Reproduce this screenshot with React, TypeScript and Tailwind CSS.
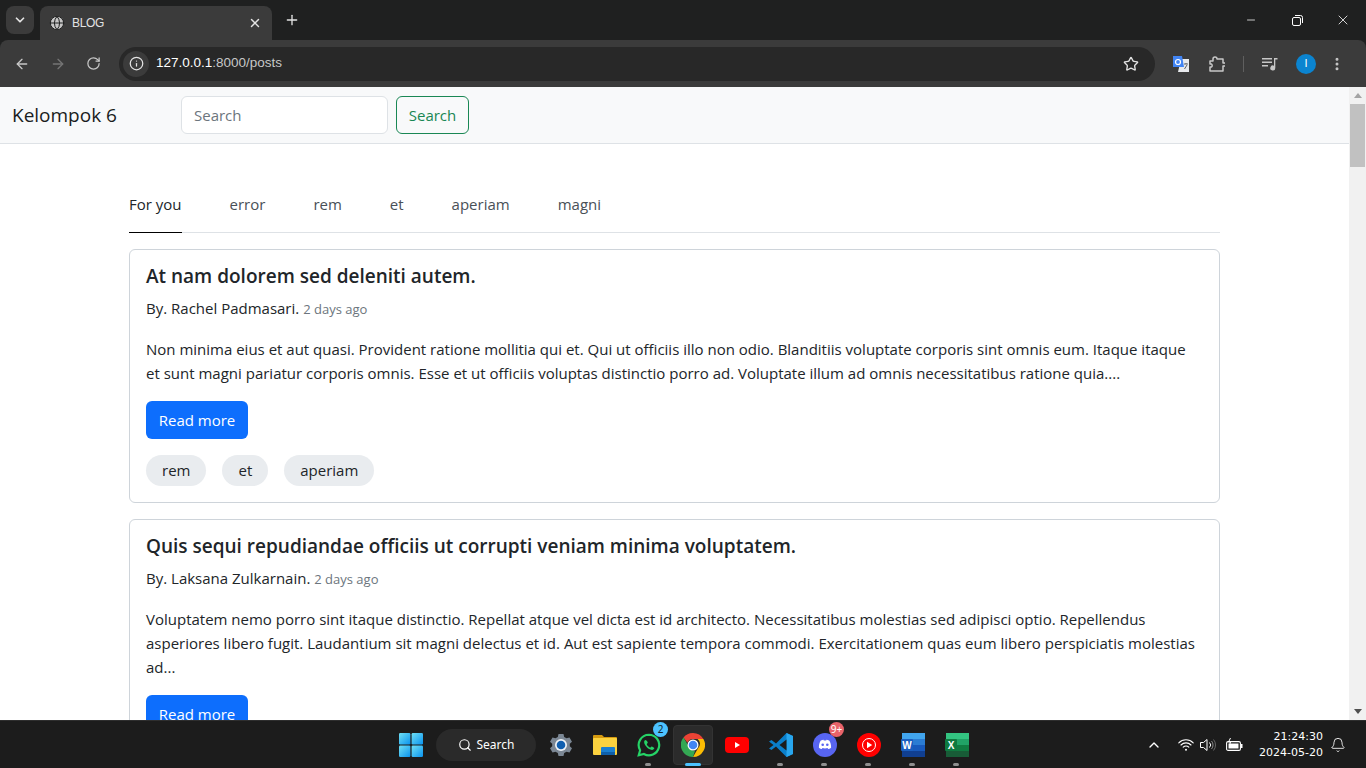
import { ArrowLeft, ArrowRight, RotateCw, Info, Star, Plus, X, ChevronDown, Minus, Search, ChevronUp, Bell, MoreVertical, Globe } from "lucide-react"

const font = "font-['Open_Sans',sans-serif]"

const WinLogo = () => (
  <svg width="24" height="24" viewBox="0 0 24 24">
    <defs>
      <linearGradient id="win" x1="0" y1="0" x2="1" y2="1">
        <stop offset="0" stopColor="#6fe0f5" />
        <stop offset="1" stopColor="#0a93ee" />
      </linearGradient>
    </defs>
    <rect x="0" y="0" width="11.4" height="11.4" rx="1.2" fill="url(#win)" />
    <rect x="12.6" y="0" width="11.4" height="11.4" rx="1.2" fill="url(#win)" />
    <rect x="0" y="12.6" width="11.4" height="11.4" rx="1.2" fill="url(#win)" />
    <rect x="12.6" y="12.6" width="11.4" height="11.4" rx="1.2" fill="url(#win)" />
  </svg>
)

const SettingsIcon = () => (
  <svg width="24" height="24" viewBox="0 0 24 24">
    <path d="M9.5 1h5l.7 3 2.3 1.3 3-.9 2.5 4.300-2.200 2.100v2.400l2.200 2.100-2.500 4.300-3-.9-2.300 1.300-.7 3h-5l-.7-3-2.300-1.300-3 .9L1 15.300l2.200-2.100v-2.400L1 8.700l2.500-4.300 3 .9 2.300-1.300z" fill="#7b8794" />
    <circle cx="12" cy="12" r="6" fill="#eef2f6" />
    <circle cx="12" cy="12" r="4.300" fill="#0f5fb0" />
  </svg>
)

const FolderIcon = () => (
  <svg width="24" height="24" viewBox="0 0 24 24">
    <path d="M0 3a1 1 0 0 1 1-1h8l2 2h12a1 1 0 0 1 1 1v3H0z" fill="#d59a10" />
    <rect x="0" y="5" width="24" height="17" rx="1" fill="#fbd23f" />
    <rect x="8" y="14" width="14" height="7" rx="1" fill="#1a7fd0" />
    <rect x="8" y="19" width="14" height="3" fill="#0f5fa8" />
  </svg>
)

const WhatsAppIcon = () => (
  <svg width="26" height="26" viewBox="0 0 24 24">
    <path d="M12 2.500A9.500 9.500 0 0 0 3.800 16.800L2.500 21.500l4.800-1.200A9.500 9.500 0 1 0 12 2.500z" fill="none" stroke="#25d366" strokeWidth="2" />
    <path d="M8.800 7.300c-.6 0-1.300.8-1.300 2 0 2.900 3.900 7.200 7.200 7.200 1.300 0 2.200-.9 2.200-1.700 0-.5-2.100-1.700-2.500-1.500-.4.200-.8 1-1.200 1-.9 0-3.200-2.200-3.200-3.100 0-.4.800-.8.900-1.200.1-.4-1-2.700-2.100-2.700z" fill="#25d366" />
  </svg>
)

const ChromeIcon = () => (
  <svg width="24" height="24" viewBox="0 0 24 24">
    <path d="M12 0a12 12 0 0 1 10.400 6H12a6 6 0 0 0-5.600 3.800L2.500 4.500A12 12 0 0 1 12 0z" fill="#ea4335" />
    <path d="M22.400 6A12 12 0 0 1 12 24l5.200-9a6 6 0 0 0-.6-9z" fill="#fbbc04" />
    <path d="M12 24A12 12 0 0 1 2.500 4.500l4.800 8.300A6 6 0 0 0 14 17.700z" fill="#34a853" />
    <circle cx="12" cy="12" r="5.500" fill="#fff" />
    <circle cx="12" cy="12" r="4.300" fill="#4285f4" />
  </svg>
)

const YoutubeIcon = () => (
  <svg width="24" height="24" viewBox="0 0 24 24">
    <rect x="0" y="4" width="24" height="16" rx="4" fill="#f00" />
    <path d="M10 9l5 3-5 3z" fill="#fff" />
  </svg>
)

const VscodeIcon = () => (
  <svg width="24" height="24" viewBox="0 0 24 24">
    <path d="M17.500 0L24 3v18l-6.500 3L7 13.500 2.500 17 0 15.500 4.500 12 0 8.500 2.500 7 7 10.500z" fill="#0a7fcb" />
    <path d="M17.500 0L24 3v18l-6.500 3z" fill="#28a6ee" />
    <path d="M17.500 6.500v11L10.500 12z" fill="#1c1c1c" />
  </svg>
)

const DiscordIcon = () => (
  <svg width="24" height="24" viewBox="0 0 24 24">
    <circle cx="12" cy="12" r="12" fill="#5865f2" />
    <path d="M7.800 7.500c1.200-.5 2.200-.7 2.700-.7l.3.600h2.400l.3-.6c.5 0 1.500.2 2.700.7 1.300 2 2 4.300 1.900 7.200-1 .8-2 1.200-2.900 1.400l-.7-1.100c-1.700.5-3.300.5-5 0l-.7 1.100c-.9-.2-1.900-.6-2.900-1.400-.1-2.900.6-5.200 1.900-7.200z" fill="#fff" />
    <circle cx="9.700" cy="11.800" r="1.300" fill="#5865f2" />
    <circle cx="14.300" cy="11.800" r="1.300" fill="#5865f2" />
  </svg>
)

const YtMusicIcon = () => (
  <svg width="24" height="24" viewBox="0 0 24 24">
    <circle cx="12" cy="12" r="12" fill="#f00" />
    <circle cx="12" cy="12" r="6.500" fill="none" stroke="#fff" strokeWidth="1" />
    <path d="M10 8.800l5.200 3.200-5.200 3.200z" fill="#fff" />
  </svg>
)

const WordIcon = () => (
  <svg width="24" height="24" viewBox="0 0 24 24">
    <rect x="1" y="0" width="23" height="6" fill="#41a5ee" />
    <rect x="1" y="6" width="23" height="6" fill="#2b7cd3" />
    <rect x="1" y="12" width="23" height="6" fill="#185abd" />
    <rect x="1" y="18" width="23" height="6" fill="#103f91" />
    <rect x="0" y="6" width="12" height="12" rx="1" fill="#1a5fc0" />
    <text x="6" y="15.500" textAnchor="middle" fontSize="10" fontWeight="700" fill="#fff" fontFamily="Liberation Sans">W</text>
  </svg>
)

const ExcelIcon = () => (
  <svg width="24" height="24" viewBox="0 0 24 24">
    <rect x="1" y="0" width="23" height="6" fill="#33c481" />
    <rect x="1" y="6" width="23" height="6" fill="#21a366" />
    <rect x="1" y="12" width="23" height="6" fill="#107c41" />
    <rect x="1" y="18" width="23" height="6" fill="#185c37" />
    <rect x="0" y="6" width="12" height="12" rx="1" fill="#0f7a40" />
    <text x="6" y="15.500" textAnchor="middle" fontSize="10" fontWeight="700" fill="#fff" fontFamily="Liberation Sans">X</text>
  </svg>
)

const TranslateIcon = () => (
  <svg width="16" height="16" viewBox="0 0 16 16">
    <path d="M8 3h8v13H5z" fill="#e8eaed" />
    <path d="M0 0h9l2 11H0z" fill="#4285f4" />
    <circle cx="5" cy="6" r="2.500" fill="none" stroke="#fff" strokeWidth="1.200" />
    <path d="M11 8h4M13 7v1M11.500 13l2.500-4" stroke="#5f6368" strokeWidth="1" fill="none" />
  </svg>
)

const PuzzleIcon = () => (
  <svg width="16" height="16" viewBox="0 0 16 16" fill="none" stroke="#c7c7c7" strokeWidth="1.500">
    <path d="M1 5h3V3a2 2 0 0 1 4 0v0h6v4h1.500a1.500 1.500 0 0 1 0 3H14v5H1v-4h1.500a2 2 0 0 0 0-3H1z" strokeLinejoin="round" />
  </svg>
)

const MediaIcon = () => (
  <svg width="16" height="14" viewBox="0 0 16 14" fill="#c7c7c7">
    <rect x="0" y="1" width="10" height="1.500" />
    <rect x="0" y="4.500" width="10" height="1.500" />
    <rect x="0" y="8" width="6" height="1.500" />
    <path d="M12 1h3.500v1.500H13.300V11a2.500 2.500 0 1 1-1.300-2.200z" />
  </svg>
)

const WifiIcon = () => (
  <svg width="16" height="14" viewBox="0 0 16 14" fill="none" stroke="#fff" strokeWidth="1.100" strokeLinecap="round">
    <path d="M.8 4.800a10 10 0 0 1 14.400 0" />
    <path d="M3 7a7 7 0 0 1 10 0" />
    <path d="M5.200 9.200a4 4 0 0 1 5.600 0" />
    <circle cx="8" cy="11.800" r="1" fill="#fff" stroke="none" />
  </svg>
)

const SpeakerIcon = () => (
  <svg width="16" height="14" viewBox="0 0 16 14" fill="none" stroke="#fff" strokeWidth="1">
    <path d="M.5 4.500h3L7 1.500v11l-3.500-3h-3z" strokeLinejoin="round" />
    <path d="M9.500 4.500a3.500 3.500 0 0 1 0 5" />
    <path d="M11.500 3a6 6 0 0 1 0 8" stroke="#8a8a8a" />
    <path d="M13.500 1.500a8.500 8.500 0 0 1 0 11" stroke="#666" />
  </svg>
)

const BatteryIcon = () => (
  <svg width="17" height="14" viewBox="0 0 17 14" fill="none">
    <rect x=".6" y="3.600" width="13.800" height="8.800" rx="1.500" stroke="#fff" strokeWidth="1.100" />
    <rect x="2.500" y="5.500" width="10" height="5" fill="#fff" />
    <rect x="15" y="6" width="1.500" height="4" fill="#fff" />
    <path d="M4.500 0L2.500 4h2L3.500 7.500" stroke="#fff" strokeWidth="1" />
  </svg>
)

const taskIcons = [
  { icon: <SettingsIcon /> },
  { icon: <FolderIcon /> },
  { icon: <WhatsAppIcon />, dot: true, badge: "2", badgeClass: "bg-[#4cc2ff] text-[#10222c]" },
  { icon: <ChromeIcon />, active: true },
  { icon: <YoutubeIcon /> },
  { icon: <VscodeIcon />, dot: true },
  { icon: <DiscordIcon />, dot: true, badge: "9+", badgeClass: "bg-[#e8636a] text-white" },
  { icon: <YtMusicIcon />, dot: true },
  { icon: <WordIcon />, dot: true },
  { icon: <ExcelIcon />, dot: true },
]

const tabs = ["error", "rem", "et", "aperiam", "magni"]

const posts = [
  {
    title: "At nam dolorem sed deleniti autem.",
    author: "Rachel Padmasari.",
    body: "Non minima eius et aut quasi. Provident ratione mollitia qui et. Qui ut officiis illo non odio. Blanditiis voluptate corporis sint omnis eum. Itaque itaque et sunt magni pariatur corporis omnis. Esse et ut officiis voluptas distinctio porro ad. Voluptate illum ad omnis necessitatibus ratione quia....",
    tags: ["rem", "et", "aperiam"],
  },
  {
    title: "Quis sequi repudiandae officiis ut corrupti veniam minima voluptatem.",
    author: "Laksana Zulkarnain.",
    body: "Voluptatem nemo porro sint itaque distinctio. Repellat atque vel dicta est id architecto. Necessitatibus molestias sed adipisci optio. Repellendus asperiores libero fugit. Laudantium sit magni delectus et id. Aut est sapiente tempora commodi. Exercitationem quas eum libero perspiciatis molestias ad...",
    tags: ["rem"],
  },
]

const App = () => {
  return (
    <div className={`h-screen w-full overflow-hidden flex flex-col bg-white ${font}`}>
      {/* tab strip */}
      <div className="h-10 shrink-0 bg-[#1f2020] flex items-end pl-[6px] font-['Liberation_Sans',sans-serif]">
        <div className="w-7 h-7 mb-[6px] rounded-lg bg-[#3b3b3b] flex items-center justify-center">
          <ChevronDown size={14} color="#e3e3e3" strokeWidth={3} />
        </div>
        <div className="relative ml-[6px] w-[232px] h-[34px] rounded-t-lg bg-[#3b3b3b] flex items-center pl-[9px] pr-[8px]">
          <Globe size={16} color="#1f2020" fill="#c7c7c7" strokeWidth={1.5} />
          <span className="ml-[7px] text-xs text-[#e3e3e3] tracking-[-0.3px]">BLOG</span>
          <X size={14} color="#e3e3e3" strokeWidth={2.5} className="ml-auto mr-[2px]" />
        </div>
        <Plus size={16} color="#e3e3e3" strokeWidth={2} className="ml-[12px] mb-[12px]" />
        <div className="ml-auto flex items-center text-white h-10">
          <div className="w-[46px] flex justify-center"><Minus size={12} strokeWidth={1.5} /></div>
          <div className="w-[46px] flex justify-center">
            <svg width="11" height="11" viewBox="0 0 11 11" fill="none" stroke="#fff">
              <rect x=".5" y="2.500" width="8" height="8" rx="1.500" />
              <path d="M3 .5h5.500a2 2 0 0 1 2 2V8" />
            </svg>
          </div>
          <div className="w-[46px] flex justify-center"><X size={16} strokeWidth={1.2} /></div>
        </div>
      </div>

      {/* toolbar */}
      <div className="h-[47px] shrink-0 bg-[#1f2020]">
        <div className="h-full bg-[#3b3b3b] rounded-t-lg flex items-center pl-[14px] pr-[14px]">
          <ArrowLeft size={16} color="#c7c7c7" strokeWidth={2} />
          <ArrowRight size={16} color="#757575" strokeWidth={2} className="ml-5" />
          <RotateCw size={15} color="#c7c7c7" strokeWidth={2} className="ml-5" />
          <div className="ml-[18px] w-[1036px] h-[34px] rounded-full bg-[#282828] flex items-center pl-1 pr-4">
            <div className="w-[26px] h-[26px] rounded-full bg-[#3b3b3b] flex items-center justify-center">
              <Info size={15} color="#e3e3e3" strokeWidth={2} />
            </div>
            <span className="ml-[7px] text-[13.500px] text-[#c7c7c7] font-['Liberation_Sans',sans-serif]">
              <span className="text-white">127.0.0.1</span>:8000/posts
            </span>
            <Star size={16} color="#e3e3e3" strokeWidth={2} className="ml-auto" />
          </div>
          <div className="ml-[18px]"><TranslateIcon /></div>
          <div className="ml-5"><PuzzleIcon /></div>
          <div className="ml-[18px] w-px h-4 bg-[#5f5f5f]" />
          <div className="ml-[18px]"><MediaIcon /></div>
          <div className="ml-[18px] w-5 h-5 rounded-full bg-[#0b84d0] flex items-center justify-center text-[11px] text-white font-['Liberation_Sans',sans-serif]">I</div>
          <MoreVertical size={16} color="#c7c7c7" strokeWidth={2.5} className="ml-[13px]" />
        </div>
      </div>

      {/* page */}
      <div className="flex-1 min-h-0 flex">
        <div className="flex-1 min-w-0 overflow-hidden">
          <nav className="h-[57px] bg-[#f8f9fa] border-b border-[#dee2e6] flex items-center pl-3">
            <span className="w-[169px] text-[19px] text-[#1a1d20]">Kelompok 6</span>
            <div className="w-[207px] h-[38px] bg-white border border-[#dee2e6] rounded-md flex items-center px-3 text-[15px] text-[#6c757d]">Search</div>
            <button className="ml-2 w-[73px] h-[38px] border border-[#198754] rounded-md text-[15px] text-[#198754]">Search</button>
          </nav>
          <div className="mx-[129px] pt-[38px] text-[#212529]">
            <div className="h-[51px] flex border-b border-[#dee2e6] gap-12 text-[15px]">
              <div className="h-[51px] pt-[11px] border-b border-black">For you</div>
              {tabs.map((t) => (
                <div key={t} className="pt-[11px] text-[#495057]">{t}</div>
              ))}
            </div>
            <div className="mt-4 flex flex-col gap-4">
              {posts.map((p) => (
                <div key={p.title} className="border border-[#ced4da] rounded-md p-4 pt-[14px]">
                  <h5 className="text-[19px] leading-6 font-semibold">{p.title}</h5>
                  <div className="mt-[8px] text-[15px] leading-6">
                    By. {p.author} <span className="text-[13px] text-[#6c757d]">2 days ago</span>
                  </div>
                  <p className="mt-4 text-[15px] leading-6">{p.body}</p>
                  <button className="mt-4 block w-[102px] h-[38px] rounded-md bg-[#0d6efd] text-white text-[15px]">Read more</button>
                  <div className="mt-4 flex gap-4">
                    {p.tags.map((t) => (
                      <span key={t} className="h-[31px] px-4 rounded-full bg-[#e9ecef] text-[15px] flex items-center">{t}</span>
                    ))}
                  </div>
                </div>
              ))}
            </div>
          </div>
        </div>
        {/* scrollbar */}
        <div className="w-[17px] shrink-0 bg-[#f1f1f1] flex flex-col items-center relative">
          <div className="mt-[6px] w-0 h-0 border-x-[4px] border-x-transparent border-b-[5px] border-b-[#a3a3a3]" />
          <div className="mt-[6px] w-[15px] h-[63px] bg-[#c1c1c1]" />
          <div className="mt-auto mb-[6px] w-0 h-0 border-x-[4px] border-x-transparent border-t-[5px] border-t-[#505050]" />
        </div>
      </div>

      {/* taskbar */}
      <div className="h-12 shrink-0 bg-[#1c1c1c] border-t border-[#2e2e2e] grid grid-cols-[389px_auto_1fr] items-center font-['Noto_Sans',sans-serif]">
        <div />
        <div className="flex items-center">
          <div className="w-11 flex justify-center"><WinLogo /></div>
          <div className="ml-[3px] mr-[3px] w-[100px] h-8 rounded-full bg-[#2a2a2a] flex items-center justify-center gap-[5px] text-xs text-white">
            <Search size={14} color="#fff" strokeWidth={2} />
            Search
          </div>
          {taskIcons.map((t, i) => (
            <div key={i} className={`relative w-11 h-10 flex items-center justify-center ${t.active ? "" : ""}`}>
              {t.active && <div className="absolute left-[2px] right-[2px] inset-y-0 rounded bg-[#2b2b2b] border border-[#333]" />}
              <div className="relative">{t.icon}</div>
              {t.badge && (
                <span className={`absolute top-[-3px] right-[3px] w-[15px] h-[15px] rounded-full text-[10px] leading-[15px] text-center ${t.badgeClass}`}>{t.badge}</span>
              )}
              {t.dot && <div className="absolute bottom-[-1px] left-[18px] w-[6px] h-[3px] rounded-full bg-[#8f8f8f]" />}
              {t.active && <div className="absolute bottom-[-1px] left-[14px] w-4 h-[3px] rounded-full bg-[#4cc2ff]" />}
            </div>
          ))}
        </div>
        <div className="flex items-center justify-end pr-[20px] text-white">
          <ChevronUp size={16} color="#fff" strokeWidth={2} />
          <div className="ml-[16px]"><WifiIcon /></div>
          <div className="ml-[6px]"><SpeakerIcon /></div>
          <div className="ml-[10px]"><BatteryIcon /></div>
          <div className="ml-[16px] text-right text-[11px] leading-4 font-['DejaVu_Sans',sans-serif]">
            <div>21:24:30</div>
            <div>2024-05-20</div>
          </div>
          <Bell size={16} color="#fff" strokeWidth={1.3} className="ml-[7px]" />
        </div>
      </div>
    </div>
  )
}

export default App
